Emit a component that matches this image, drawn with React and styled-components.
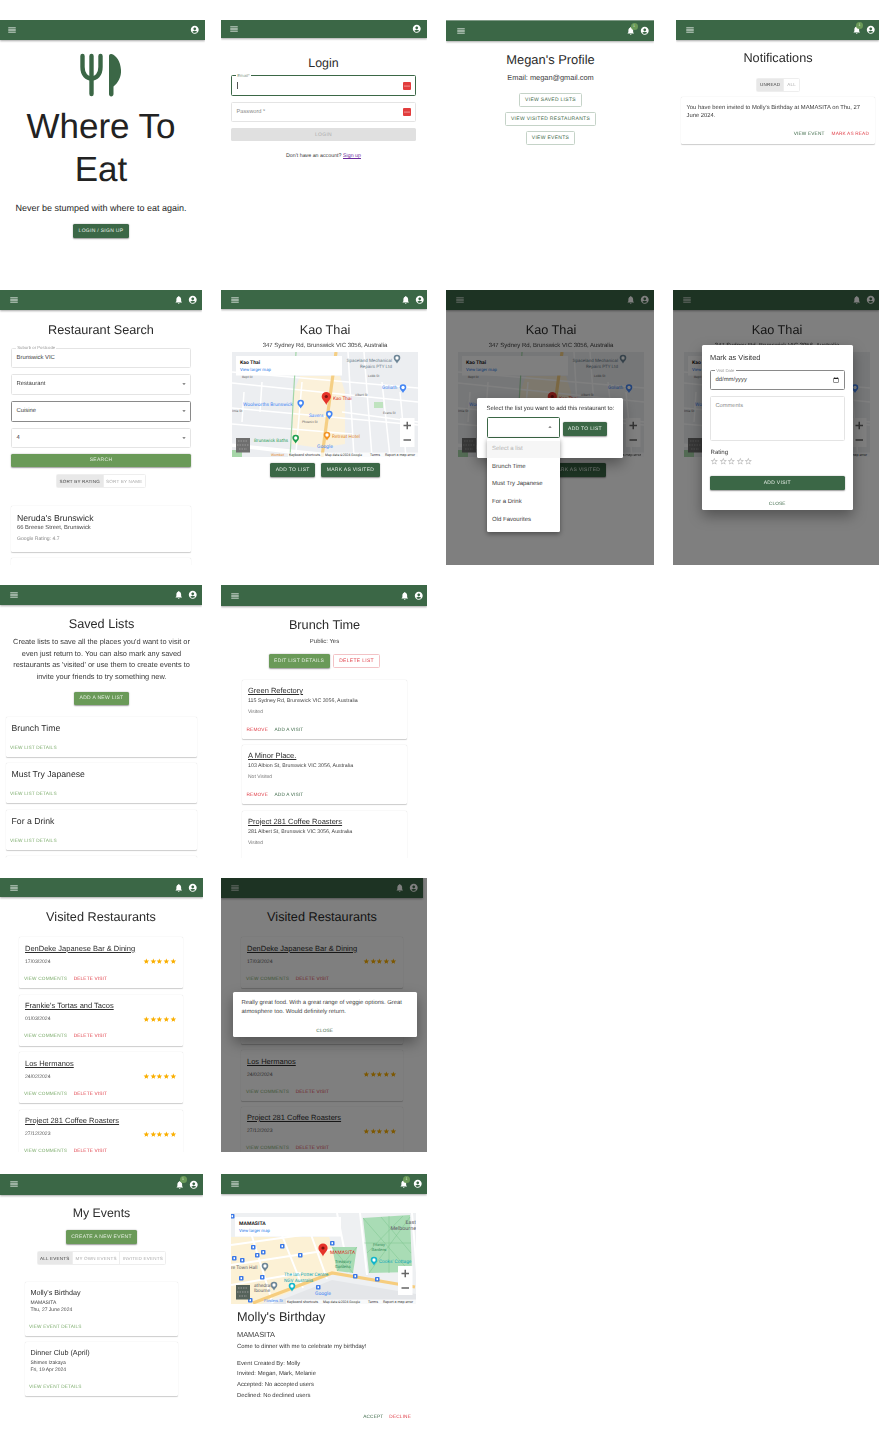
import React from "react";
import styled, { createGlobalStyle, css } from "styled-components";
import { MdMenu, MdNotifications, MdAccountCircle, MdStar, MdStarBorder, MdArrowDropDown, MdArrowDropUp, MdCalendarToday } from "react-icons/md";

const DARK = "#3b6746";
const LIGHT = "#6a9a58";
const RED = "#e0404a";
const mt = css`margin-top:${(p) => p.$mt || 0}px;`;

const Global = createGlobalStyle`
  html,body{margin:0;padding:0;background:#fff;}
  body{width:879px;height:1445px;overflow:hidden;font-family:"Liberation Sans",Arial,sans-serif;color:#262626;text-rendering:geometricPrecision;-webkit-font-smoothing:antialiased;}
  *{box-sizing:border-box;}
`;
const Sheet = styled.div`padding-top:20px;width:879px;height:1445px;filter:blur(.3px);opacity:.999;`;
const Row = styled.div`display:flex;height:${(p) => p.$h}px;margin-bottom:${(p) => p.$mb || 0}px;`;
const Screen = styled.section`position:relative;flex:none;overflow:hidden;width:${(p) => p.$w}px;margin-left:${(p) => p.$ml || 0}px;height:100%;background:#fff;`;
const Bar = styled.header`
  display:flex;align-items:center;color:#fff;background:${DARK};
  height:${(p) => p.$h}px;width:${(p) => (p.$w ? p.$w + "px" : "100%")};padding:0 ${(p) => p.$r}px 0 ${(p) => p.$l}px;
  box-shadow:0 1px 2px rgba(0,0,0,.35);
  ${(p) => p.$line && "border-top:1px solid #7f9a86;"}
`;
const Grow = styled.div`flex:1;`;
const BellWrap = styled.span`position:relative;display:flex;margin-right:4.5px;`;
const Badge = styled.span`position:absolute;left:4.5px;top:-3.5px;width:7px;height:7px;border-radius:50%;background:${LIGHT};color:#cfe3c7;font-size:3.5px;line-height:7px;text-align:center;`;

const AppBar = ({ h = 20, l = 7, r = 6, w, bell, badge, line }) => (
  <Bar $h={h} $l={l} $r={r} $w={w} $line={line}>
    <MdMenu size={10} />
    <Grow />
    {bell && (
      <BellWrap>
        <MdNotifications size={9.5} />
        {badge && <Badge>1</Badge>}
      </BellWrap>
    )}
    <MdAccountCircle size={9.5} />
  </Bar>
);

const Body = styled.div`display:flex;flex-direction:column;align-items:${(p) => p.$align || "stretch"};padding:0 ${(p) => p.$r || 0}px 0 ${(p) => p.$l || 0}px;`;
const Title = styled.h1`${mt}margin-bottom:0;height:16px;padding-top:${(p) => p.$pt || 0}px;font-weight:400;text-align:center;color:#2b2b2b;line-height:16px;font-size:${(p) => p.$size || 12.7}px;${(p) => p.$left && `text-align:left;margin-left:${p.$left}px;`}`;
const Hero = styled.h1`margin:7.5px 0 0;font-weight:400;font-size:35px;line-height:43px;text-align:center;color:#222;`;
const Tagline = styled.p`margin:11.5px 0 0;font-size:9px;line-height:12px;text-align:center;`;
const Para = styled.p`${mt}margin-bottom:0;font-size:${(p) => p.$size || 5.6}px;line-height:${(p) => p.$lh || 8}px;text-align:${(p) => (p.$center ? "center" : "left")};color:${(p) => p.$color || "#3a3a3a"};${(p) => p.$ml && `margin-left:${p.$ml}px;`}${(p) => p.$nowrap && "white-space:nowrap;"}`;
const LinkText = styled.a`color:#6a2a9c;text-decoration:underline;`;

const Btn = styled.button`
  ${mt}display:block;border:0;font-family:inherit;text-rendering:geometricPrecision;text-transform:uppercase;font-size:5px;letter-spacing:.3px;padding:0 5.5px;border-radius:1.5px;
  height:${(p) => p.$h || 14}px;${(p) => p.$full && "width:100%;"}${(p) => p.$auto && "margin-left:auto;margin-right:auto;"}${(p) => p.$mb && `margin-bottom:${p.$mb}px;`}
  ${(p) => p.$kind === "dark" && `background:${DARK};color:#e8efe9;box-shadow:0 .5px 1.5px rgba(0,0,0,.4);`}
  ${(p) => p.$kind === "light" && `background:${LIGHT};color:#e8f0e4;box-shadow:0 .5px 1.5px rgba(0,0,0,.4);`}
  ${(p) => p.$kind === "outline" && `background:#fff;color:${DARK};border:.7px solid #c5d3c8;padding:0 4.8px;`}
  ${(p) => p.$kind === "danger" && `background:#fff;color:${RED};border:.7px solid #f3c3c6;`}
  ${(p) => p.$kind === "off" && `background:#e0e0e0;color:#adadad;`}
`;
const BtnRow = styled.div`${mt}display:flex;justify-content:center;gap:${(p) => p.$gap || 6}px;`;
const TextBtn = styled.span`font-size:4.75px;letter-spacing:.15px;line-height:7px;text-transform:uppercase;color:${(p) => p.$color || DARK};white-space:nowrap;`;
const Actions = styled.div`${mt}display:flex;gap:${(p) => p.$gap || 6.5}px;justify-content:${(p) => (p.$end ? "flex-end" : "flex-start")};${(p) => p.$pr && `padding-right:${p.$pr}px;`}`;

const Toggle = styled.div`${mt}display:flex;align-self:center;border:.6px solid #eee;border-radius:1.5px;height:${(p) => p.$h || 14.5}px;`;
const ToggleItem = styled.span`display:flex;align-items:center;padding:0 ${(p) => p.$p || 2.5}px;font-size:4.55px;letter-spacing:.2px;text-transform:uppercase;color:${(p) => (p.$on ? "#444" : "#ababab")};background:${(p) => (p.$on ? "#e8e8e8" : "#fff")};& + &{border-left:.6px solid #eee;}`;

const Field = styled.div`
  ${mt}position:relative;display:flex;align-items:${(p) => (p.$top ? "flex-start" : "center")};justify-content:space-between;height:${(p) => p.$h || 20.6}px;padding:${(p) => (p.$top ? "6px" : "0")} 4.5px 0;
  ${(p) => p.$w && `width:${p.$w}px;`}
  border-radius:1.5px;border:${(p) => p.$b || ".7px solid #e4e4e4"};font-size:${(p) => p.$size || 5.9}px;color:${(p) => p.$color || "#3c3c3c"};background:#fff;
`;
const Float = styled.span`position:absolute;left:4px;top:-2.5px;padding:0 1.2px;background:#fff;font-size:4.3px;line-height:4.5px;color:${(p) => p.$color || "#9a9a9a"};`;
const Caret = styled.span`display:block;width:.6px;height:7px;background:#555;`;
const Arrow = styled(MdArrowDropDown)`color:#666;margin-right:-2px;`;

const Card = styled.article`
  ${mt}flex:none;background:#fff;border-radius:1.5px;box-shadow:0 .6px 1px rgba(0,0,0,.2),0 0 1.2px rgba(0,0,0,.05);
  ${(p) => p.$h && `height:${p.$h}px;`}${(p) => p.$w && `width:${p.$w}px;`}padding:${(p) => p.$pt || 6}px ${(p) => p.$pr || 6}px 0 ${(p) => p.$pl || 6}px;
`;
const CardName = styled.div`font-size:${(p) => p.$size || 7.5}px;line-height:${(p) => p.$lh || 10}px;color:#2d2d2d;${(p) => p.$u && "text-decoration:underline;"}`;
const CardLine = styled.div`${mt}font-size:${(p) => p.$size || 5}px;line-height:${(p) => p.$lh || 7}px;color:${(p) => p.$color || "#444"};`;
const Inset = styled.div`margin-left:${(p) => p.$x || -1.5}px;`;
const DateRow = styled.div`${mt}display:flex;align-items:center;justify-content:space-between;height:7px;font-size:5.1px;color:#555;`;
const Stars = styled.span`${mt}display:flex;color:#faaf00;`;
const Star = styled(MdStar)`flex:none;`;
const Empty = styled(MdStarBorder)`flex:none;color:#b9b9b9;`;

const Overlay = styled.div`position:absolute;inset:0;background:rgba(0,0,0,.5);`;
const Dialog = styled.div`
  position:absolute;left:${(p) => p.$x}px;top:${(p) => p.$y}px;width:${(p) => p.$w}px;height:${(p) => p.$h}px;background:#fff;border-radius:1.5px;
  padding:7px ${(p) => p.$p}px 0;box-shadow:0 6px 14px rgba(0,0,0,.35);
`;
const DialogHead = styled.h2`margin:0;height:10px;padding-top:.5px;font-weight:400;font-size:7.4px;line-height:10px;color:#333;`;
const DialogRow = styled.div`${mt}display:flex;align-items:flex-end;gap:3px;`;
const Menu = styled.ul`
  position:absolute;left:${(p) => p.$x}px;top:${(p) => p.$y}px;width:73.5px;height:94px;margin:0;padding:2.5px 0;list-style:none;background:#fff;border-radius:1.5px;box-shadow:0 2px 5px rgba(0,0,0,.4);
`;
const MenuItem = styled.li`height:17.6px;padding-left:5.5px;display:flex;align-items:center;font-size:6px;color:${(p) => (p.$off ? "#b5b5b5" : "#3b3b3b")};background:${(p) => (p.$off ? "#f6f6f6" : "#fff")};`;
const Center = styled.div`${mt}text-align:center;font-size:5px;line-height:7px;`;
const MapBox = styled.svg`${mt}display:block;flex:none;`;
const LogoSvg = styled.svg`display:block;align-self:center;margin:13px 0 0;`;
const PmIcon = styled.svg`flex:none;`;
const VisitedTitle = styled(Title)`align-self:center;`;

const Logo = () => (
  <LogoSvg width="44" height="44" viewBox="0 0 44 44">
    <g fill="none" stroke={DARK} strokeWidth="4.4" strokeLinecap="round">
      <path d="M3.500 3V14C3.500 22 8 25.500 12.500 25.500S21.500 22 21.500 14V3" />
      <path d="M12.500 3V41" />
    </g>
    <path fill={DARK} d="M30 3C30 1.500 31 .8 32.300 1C37 2 41.500 8 42 17C42.500 24 39 30 34.500 33.500V41C34.500 42.500 33.500 43.400 32.200 43.400C30.900 43.400 30 42.500 30 41Z" />
  </LogoSvg>
);

const Pm = () => (
  <PmIcon width="8" height="8" viewBox="0 0 8 8">
    <rect width="8" height="8" rx="1" fill="#e23d3d" />
    <circle cx="2" cy="4" r=".6" fill="#fff" /><circle cx="4" cy="4" r=".6" fill="#fff" /><circle cx="6" cy="4" r=".6" fill="#fff" />
  </PmIcon>
);

const Pin = ({ x, y, c = "#4285f4", r = 3.3 }) => (
  <g>
    <path d={`M${x - r} ${y}A${r} ${r} 0 1 1 ${x + r} ${y}C${x + r} ${y + r * .7} ${x + r * .3} ${y + r} ${x} ${y + r * 1.7}C${x - r * .3} ${y + r} ${x - r} ${y + r * .7} ${x - r} ${y}Z`} fill={c} />
    <circle cx={x} cy={y} r={r * .5} fill="#fff" />
  </g>
);
const Red = ({ x, y }) => (
  <g>
    <path d={`M${x - 4.6} ${y}A4.600 4.600 0 1 1 ${x + 4.6} ${y}C${x + 4.6} ${y + 3.6} ${x + 1} ${y + 5} ${x} ${y + 8.6}C${x - 1} ${y + 5} ${x - 4.6} ${y + 3.6} ${x - 4.6} ${y}Z`} fill="#e5332a" />
    <circle cx={x} cy={y} r="1.600" fill="#7d1410" />
  </g>
);
const Controls = ({ x, y }) => (
  <g>
    <rect x={x} y={y} width="14.500" height="29" fill="#fff" />
    <path d={`M${x + 3.5} ${y + 7.5}h7.500M${x + 7.25} ${y + 3.7}v7.500M${x + 3.5} ${y + 22}h7.500`} stroke="#666" strokeWidth="1.500" />
  </g>
);
const InfoCard = ({ w, name }) => (
  <g>
    <rect x="4" y="4" width={w} height="19.500" fill="#fff" />
    <text x="8" y="11.500" fontSize="5.100" fontWeight="700" fill="#222">{name}</text>
    <text x="8" y="18.500" fontSize="4.300" fill="#1a73e8">View larger map</text>
  </g>
);
const Thumb = ({ x, y, c }) => (
  <g>
    <rect x={x} y={y} width="14" height="14.500" fill={c} />
    <path d={`M${x + 2} ${y + 3}h9M${x + 1} ${y + 7}h12M${x + 3} ${y + 11}h8`} stroke="#9a9a9a" strokeWidth="1.200" strokeDasharray="1.500 1" />
  </g>
);
const Attr = ({ x, y, w }) => (
  <g fontSize="3.600" fill="#333">
    <rect x={x} y={y} width={w} height="4.500" fill="#fff" opacity=".75" />
    <text x={x + 1} y={y + 3.4}>Keyboard shortcuts</text>
    <text x={x + 37} y={y + 3.4} fontSize="3.400">Map data ©2024 Google</text>
    <text x={x + 82} y={y + 3.4}>Terms</text>
    <text x={x + 97} y={y + 3.4}>Report a map error</text>
  </g>
);

const KaoMap = ({ mt: top }) => (
  <MapBox $mt={top} width="186" height="105" viewBox="0 0 186 105" fontFamily="Roboto,'Liberation Sans',sans-serif">
    <rect width="186" height="105" fill="#eceef1" />
    <path d="M68 24H108L113 40V92L88 96L60 92L62 40Z" fill="#fbf1da" />
    <g stroke="#fff" strokeWidth="1.500" fill="none">
      <path d="M0 20L186 36M0 31L186 50M0 56L186 73M0 72L120 82M110 60L186 70M0 94L100 106" />
      <path d="M116 0L122 105M132 0L140 105M150 30L158 105M168 40L174 105M30 30L28 60M12 40L10 70M70 30L64 100" />
    </g>
    <path d="M0 93L100 103" stroke="#fff" strokeWidth="3" />
    <path d="M104 0L90 105" stroke="#f5cf84" strokeWidth="3.200" fill="none" />
    <path d="M64 0L58 105" stroke="#a3d6a8" strokeWidth="1.200" fill="none" />
    <rect x="142" y="50" width="9" height="6" fill="#bfe3bf" />
    <rect x="0" y="98" width="10" height="7" fill="#a6d6a8" />
    <g fontSize="3.300" fill="#666">
      <text x="136" y="25">Lobb St</text><text x="123" y="44">Albert St</text><text x="151" y="62">Evans St</text>
      <text x="10" y="26">Bept St</text><text x="0" y="60">Imia St</text><text x="70" y="71">Phoenix St</text>
    </g>
    <text x="160" y="10" textAnchor="end" fontSize="4.500" fill="#6d7f8c">Spaceland Mechanical</text>
    <text x="160" y="15.500" textAnchor="end" fontSize="4.500" fill="#6d7f8c">Repairs PTY Ltd</text>
    <Pin x={165} y={6} c="#6d8596" />
    <text x="150" y="37" fontSize="4.800" fill="#4285f4">Goliath</text><Pin x={171} y={35.5} />
    <text x="11" y="54" fontSize="4.900" fill="#4285f4">Woolworths Brunswick</text><Pin x={68.7} y={51} />
    <text x="77" y="65" fontSize="4.800" fill="#4285f4">Savers</text><Pin x={97.3} y={62} />
    <text x="22" y="89.500" fontSize="4.600" fill="#2e9e5b">Brunswick Baths</text><Pin x={63.7} y={86} c="#1e9e4f" />
    <text x="100" y="85.500" fontSize="4.800" fill="#e28a2a">Retreat Hotel</text><Pin x={95} y={83} c="#f29425" />
    <text x="101" y="48" fontSize="4.800" fill="#d9362b">Kao Thai</text>
    <text x="85" y="96" fontSize="5" fill="#4285f4">Google</text>
    <text x="39" y="103.500" fontSize="3.500" fill="#e28a2a">Wombat</text>
    <InfoCard w={106} name="Kao Thai" />
    <Red x={94.3} y={44.5} />
    <Controls x={168} y={66} />
    <Thumb x={4} y={86} c="#6f6f6f" />
    <Attr x={56} y={100.500} w={130} />
  </MapBox>
);

const Pk = ({ x, y }) => (
  <g><rect x={x} y={y} width="4.500" height="4.500" rx=".8" fill="#3b78e7" /><rect x={x + 1.5} y={y + 1.2} width="1.500" height="2" fill="#fff" /></g>
);
const MamaMap = ({ mt: top }) => (
  <MapBox $mt={top} width="185" height="91" viewBox="0 0 185 91" fontFamily="Roboto,'Liberation Sans',sans-serif">
    <rect width="185" height="91" fill="#eef0f2" />
    <path d="M0 24H98L110 58L30 91H0Z" fill="#fcf1d5" />
    <g stroke="#fff" strokeWidth="2" fill="none">
      <path d="M0 32L100 18M0 52L105 36M0 72L70 60M20 20L42 91M50 20L72 75M78 16L96 66M106 0L118 60" />
    </g>
    <path d="M101 34L126 34L122 60L106 58Z" fill="#a9dcb5" />
    <path d="M132 5L179 2L181 59L138 60Z" fill="#a9dcb5" />
    <g stroke="#7cc48f" strokeWidth=".5" fill="none">
      <path d="M132 5L179 59M179 4L138 60M158 3L158 60M133 30L180 30M150 4L180 40M172 3L136 40" />
      <path d="M101 34L122 60M126 34L106 58" />
    </g>
    <path d="M129 0L136 62M181 0L186 60" stroke="#fff" strokeWidth="2" fill="none" />
    <path d="M22 90L101 60L184 74" stroke="#f6cd7e" strokeWidth="3.200" fill="none" />
    <path d="M40 91L101 67L185 81V91Z" fill="#e4e6e9" />
    <text x="185" y="11" textAnchor="end" fontSize="5.400" fill="#5f6368">East</text>
    <text x="185" y="17" textAnchor="end" fontSize="5.400" fill="#5f6368">Melbourne</text>
    <text x="148" y="33" fontSize="4" fill="#2e8b57" textAnchor="middle">Fitzroy</text>
    <text x="148" y="38" fontSize="4" fill="#2e8b57" textAnchor="middle">Gardens</text>
    <text x="104" y="50" fontSize="4.200" fill="#2e8b57">Treasury</text>
    <text x="104" y="55" fontSize="4.200" fill="#2e8b57">Gardens</text>
    <text x="148" y="49.500" fontSize="4.800" fill="#12a7b8">Cooks' Cottage</text><Pin x={143} y={47} c="#12b5cb" />
    <text x="0" y="55.500" fontSize="4.800" fill="#5f6368">re Town Hall</text><Pin x={34} y={53} c="#6d8596" />
    <text x="53" y="62.500" fontSize="4.700" fill="#12a7b8">The Ian Potter Centre</text>
    <text x="53" y="68.500" fontSize="4.700" fill="#12a7b8">NGV Australia</text><Pin x={61} y={73} c="#12b5cb" />
    <text x="23" y="74" fontSize="4.800" fill="#5f6368">athedral,</text><text x="23" y="79" fontSize="4.800" fill="#5f6368">lbourne</text><Pin x={43} y={72} c="#6d8596" />
    <text x="84" y="82" fontSize="5" fill="#4285f4">Google</text>
    <text x="33" y="88.500" fontSize="4" fill="#4285f4">Flinders St</text>
    {[[-1,1],[20,32],[49,31],[1,43],[9,45],[24,40],[30,37],[67,40],[99,28],[122,61],[144,64],[29,62],[8,63],[85,72],[17,85]].map(([x,y],i)=>(<Pk key={i} x={x} y={y} />))}
    <text x="99" y="40.500" fontSize="4.900" fill="#d9362b">MAMASITA</text>
    <InfoCard w={106} name="MAMASITA" />
    <Red x={92} y={35} />
    <Controls x={167} y={53} />
    <Thumb x={5} y={72} c="#55625a" />
    <Attr x={55} y={86.500} w={130} />
  </MapBox>
);

const KaoPage = ({ l, r, top = 11 }) => (
  <Body $l={l} $r={r} $align="center">
    <Title $mt={top} $pt={1}>Kao Thai</Title>
    <Para $mt={top === 11 ? 5 : 4.5} $size={6} $center>347 Sydney Rd, Brunswick VIC 3056, Australia</Para>
    <KaoMap mt={top === 11 ? 2 : 2.5} />
    <BtnRow $mt={6}>
      <Btn $kind="dark">Add to list</Btn>
      <Btn $kind="dark">Mark as visited</Btn>
    </BtnRow>
  </Body>
);

const ListCard = ({ name, mt: top }) => (
  <Card $mt={top} $h={40} $pl={5.5}>
    <CardName $size={8.7} $lh={11}>{name}</CardName>
    <Inset><CardLine $mt={11}><TextBtn $color="#7fae6f">View list details</TextBtn></CardLine></Inset>
  </Card>
);
const PlaceCard = ({ name, addr, state, mt: top, h = 59, cut }) => (
  <Card $mt={top} $h={h} $w={165}>
    <CardName $u>{name}</CardName>
    <CardLine $mt={2} $size={5.3} $lh={6}>{addr}</CardLine>
    <CardLine $mt={5} $size={5} $lh={6} $color="#777">{state}</CardLine>
    {!cut && (
      <Inset>
        <Actions $mt={11.5}><TextBtn $color={RED}>Remove</TextBtn><TextBtn>Add a visit</TextBtn></Actions>
      </Inset>
    )}
  </Card>
);
const VisitCard = ({ name, date, mt: top, h, w }) => (
  <Card $mt={top} $h={h} $w={w} $pt={6.5} $pr={6.5}>
    <CardName $u>{name}</CardName>
    <DateRow $mt={4.5}>
      {date}
      <Stars>{[0, 1, 2, 3, 4].map((i) => <Star key={i} size={6.7} />)}</Stars>
    </DateRow>
    <Inset $x={-1}>
      <Actions $mt={10.5}><TextBtn $color="#7fae6f">View comments</TextBtn><TextBtn $color={RED}>Delete visit</TextBtn></Actions>
    </Inset>
  </Card>
);
const VisitList = ({ h, gap, w }) => (
  <>
    <VisitCard mt={12} h={h} w={w} name="DenDeke Japanese Bar & Dining" date="17/03/2024" />
    <VisitCard mt={gap} h={h} w={w} name="Frankie's Tortas and Tacos" date="01/03/2024" />
    <VisitCard mt={gap} h={h} w={w} name="Los Hermanos" date="24/02/2024" />
    <VisitCard mt={gap} h={h} w={w} name="Project 281 Coffee Roasters" date="27/12/2023" />
  </>
);
const EventCard = ({ name, place, date, mt: top }) => (
  <Card $mt={top} $h={54} $w={153} $pl={5.5}>
    <CardName $size={7.2}>{name}</CardName>
    <CardLine $mt={1.5}>{place}</CardLine>
    <CardLine>{date}</CardLine>
    <Inset><CardLine $mt={10.5}><TextBtn $color="#7fae6f">View event details</TextBtn></CardLine></Inset>
  </Card>
);

const Home = () => (
  <Screen $w={205}>
    <AppBar h={20} l={7} r={5.5} />
    <Body $align="center" $r={3}>
      <Logo />
      <Hero>Where To<br />Eat</Hero>
      <Tagline>Never be stumped with where to eat again.</Tagline>
      <Btn $mt={9.5} $kind="dark" $h={14}>Login / Sign up</Btn>
    </Body>
  </Screen>
);
const Login = () => (
  <Screen $w={206} $ml={16}>
    <AppBar h={18} l={8} r={5.5} />
    <Body $l={10} $r={11}>
      <Title $mt={17} $size={12.4}>Login</Title>
      <Field $mt={4} $h={21} $b={`.9px solid ${DARK}`}>
        <Float $color="#7f9a86">Email*</Float><Caret /><Pm />
      </Field>
      <Field $mt={5.5} $h={20} $color="#8a8a8a" $size={5.7}>Password *<Pm /></Field>
      <Btn $mt={6.5} $h={13} $kind="off" $full>Login</Btn>
      <Para $mt={11} $size={5.3} $center>Don't have an account? <LinkText>Sign up</LinkText></Para>
    </Body>
  </Screen>
);
const Profile = () => (
  <Screen $w={208} $ml={19}>
    <AppBar h={21} l={9.5} r={4.5} bell badge line />
    <Body $align="center" $l={1}>
      <Title $mt={11} $size={12.9}>Megan's Profile</Title>
      <Para $mt={5} $size={7.4} $lh={10}>Email: megan@gmail.com</Para>
      <Btn $mt={10} $h={13.5} $kind="outline">View saved lists</Btn>
      <Btn $mt={5.5} $h={13.5} $kind="outline">View visited restaurants</Btn>
      <Btn $mt={5.5} $h={13.5} $kind="outline">View events</Btn>
    </Body>
  </Screen>
);
const Notifs = () => (
  <Screen $w={203} $ml={22}>
    <AppBar h={20} l={8.5} r={4} bell badge />
    <Body $l={5} $r={4}>
      <Title $mt={10}>Notifications</Title>
      <Toggle $mt={11.5}><ToggleItem $on $p={3}>Unread</ToggleItem><ToggleItem $p={3}>All</ToggleItem></Toggle>
      <Card $mt={5} $h={47} $pt={7} $pl={5.5}>
        <Para $size={5.85}>You have been invited to Molly's Birthday at MAMASITA on Thu, 27 June 2024.</Para>
        <Actions $mt={11} $end $gap={7}><TextBtn>View event</TextBtn><TextBtn $color={RED}>Mark as read</TextBtn></Actions>
      </Card>
    </Body>
  </Screen>
);
const Search = () => (
  <Screen $w={202}>
    <AppBar h={20} l={8.5} r={5} bell />
    <Body $l={11} $r={11}>
      <Title $mt={11} $pt={1}>Restaurant Search</Title>
      <Field $mt={10.7}><Float>Suburb or Postcode</Float>Brunswick VIC</Field>
      <Field $mt={5.7}>Restaurant<Arrow size={8} /></Field>
      <Field $mt={6.4} $b="1px solid #8a8a8a">Cuisine<Arrow size={8} /></Field>
      <Field $mt={6}>4<Arrow size={8} /></Field>
      <Btn $mt={5.7} $h={13} $kind="light" $full>Search</Btn>
      <Toggle $mt={7}><ToggleItem $on>Sort by rating</ToggleItem><ToggleItem>Sort by name</ToggleItem></Toggle>
      <Card $mt={17.5} $h={46} $pt={7}>
        <CardName $size={8.7} $lh={11}>Neruda's Brunswick</CardName>
        <CardLine $mt={1} $size={5.85}>66 Breese Street, Brunswick</CardLine>
        <CardLine $mt={4.5} $size={5.1} $color="#888">Google Rating: 4.7</CardLine>
      </Card>
      <Card $mt={6} $h={46} />
    </Body>
  </Screen>
);
const Kao = () => (
  <Screen $w={206} $ml={19}>
    <AppBar h={19} l={8.5} r={3} bell />
    <KaoPage l={11} r={9} top={12} />
  </Screen>
);
const KaoList = () => (
  <Screen $w={208} $ml={19}>
    <AppBar h={20} l={9} r={4.5} bell />
    <KaoPage l={12} r={10} />
    <Overlay />
    <Dialog $x={31} $y={108} $w={146} $h={60} $p={9.5}>
      <Para $size={6} $color="#333" $nowrap>Select the list you want to add this restaurant to:</Para>
      <DialogRow $mt={4}>
        <Field $w={73} $h={20.5} $b={`.9px solid ${DARK}`}>
          <span /><MdArrowDropUp size={8} color="#666" />
        </Field>
        <Btn $kind="dark" $mb={1.5}>Add to list</Btn>
      </DialogRow>
    </Dialog>
    <Menu $x={40.5} $y={148}>
      <MenuItem $off>Select a list</MenuItem>
      <MenuItem>Brunch Time</MenuItem>
      <MenuItem>Must Try Japanese</MenuItem>
      <MenuItem>For a Drink</MenuItem>
      <MenuItem>Old Favourites</MenuItem>
    </Menu>
  </Screen>
);
const KaoVisit = () => (
  <Screen $w={206} $ml={19}>
    <AppBar h={20} l={9} r={3.5} bell />
    <KaoPage l={12} r={10} />
    <Overlay />
    <Dialog $x={28.5} $y={55} $w={151.5} $h={165} $p={8.5}>
      <DialogHead>Mark as Visited</DialogHead>
      <Field $mt={8} $h={20} $b="1px solid #8a8a8a">
        <Float>Visit Date</Float>dd/mm/yyyy<MdCalendarToday size={6} color="#222" />
      </Field>
      <Field $mt={6} $h={45} $top $color="#8a8a8a" $size={5.7}>Comments</Field>
      <Para $mt={7.5} $size={6.1} $lh={7} $ml={.5}>Rating</Para>
      <Stars $mt={1}>{[0, 1, 2, 3, 4].map((i) => <Empty key={i} size={8.6} />)}</Stars>
      <Btn $mt={11.2} $h={13.5} $kind="dark" $full>Add visit</Btn>
      <Center $mt={11.5}><TextBtn>Close</TextBtn></Center>
    </Dialog>
  </Screen>
);
const Lists = () => (
  <Screen $w={202}>
    <AppBar h={20} l={9} r={5} bell />
    <Body $l={6} $r={5}>
      <Title $mt={11}>Saved Lists</Title>
      <Para $mt={4} $size={7.4} $lh={11.7} $center>Create lists to save all the places you'd want to visit or even just return to. You can also mark any saved restaurants as 'visited' or use them to create events to invite your friends to try something new.</Para>
      <Center $mt={9}><Btn $h={13} $kind="light" $auto>Add a new list</Btn></Center>
      <ListCard mt={12} name="Brunch Time" />
      <ListCard mt={6.5} name="Must Try Japanese" />
      <ListCard mt={6.5} name="For a Drink" />
      <Card $mt={6.5} $h={40} />
    </Body>
  </Screen>
);
const ListDetail = () => (
  <Screen $w={206} $ml={19}>
    <AppBar h={21} l={9} r={4} bell />
    <Body $l={21} $r={20}>
      <Title $mt={11}>Brunch Time</Title>
      <Para $mt={5.5} $size={6} $lh={7} $center>Public: Yes</Para>
      <BtnRow $mt={8.5} $gap={3}>
        <Btn $h={13.5} $kind="light">Edit list details</Btn>
        <Btn $h={13.5} $kind="danger">Delete list</Btn>
      </BtnRow>
      <PlaceCard mt={12.5} name="Green Refectory" addr="115 Sydney Rd, Brunswick VIC 3056, Australia" state="Visited" />
      <PlaceCard mt={6} name="A Minor Place." addr="103 Albion St, Brunswick VIC 3056, Australia" state="Not Visited" />
      <PlaceCard mt={6.5} cut name="Project 281 Coffee Roasters" addr="281 Albert St, Brunswick VIC 3056, Australia" state="Visited" />
    </Body>
  </Screen>
);
const Visited = () => (
  <Screen $w={203}>
    <AppBar h={19} l={8.5} r={6} bell />
    <Body $l={19} $r={20} $align="flex-start">
      <VisitedTitle $mt={12}>Visited Restaurants</VisitedTitle>
      <VisitList h={51} gap={6.5} w={164} />
    </Body>
  </Screen>
);
const VisitedDark = () => (
  <Screen $w={206} $ml={18}>
    <AppBar h={20} w={202} l={9} r={5} bell />
    <Body $l={20} $r={24} $align="flex-start">
      <VisitedTitle $mt={11}>Visited Restaurants</VisitedTitle>
      <VisitList h={50.5} gap={6} w={162} />
    </Body>
    <Overlay />
    <Dialog $x={11.5} $y={114} $w={184.5} $h={45} $p={9}>
      <Para $size={5.9} $lh={8.5} $color="#444">Really great food. With a great range of veggie options. Great atmosphere too. Would definitely return.</Para>
      <Center $mt={11.5}><TextBtn>Close</TextBtn></Center>
    </Dialog>
  </Screen>
);
const Events = () => (
  <Screen $w={203}>
    <AppBar h={20.5} l={9} r={4.5} bell badge />
    <Body $l={25} $r={25}>
      <Title $mt={10.5} $size={12.3}>My Events</Title>
      <Center $mt={9}><Btn $kind="light" $auto>Create a new event</Btn></Center>
      <Toggle $mt={7} $h={14}><ToggleItem $on>All events</ToggleItem><ToggleItem>My own events</ToggleItem><ToggleItem>Invited events</ToggleItem></Toggle>
      <EventCard mt={17} name="Molly's Birthday" place="MAMASITA" date="Thu, 27 June 2024" />
      <EventCard mt={6} name="Dinner Club (April)" place="Shimes Izakaya" date="Fri, 19 Apr 2024" />
    </Body>
  </Screen>
);
const EventDetail = () => (
  <Screen $w={206} $ml={18}>
    <AppBar h={20} l={8.5} r={5} bell badge />
    <Body $l={10} $r={11}>
      <MamaMap mt={19} />
      <Title $mt={5} $left={6}>Molly's Birthday</Title>
      <Para $mt={5} $size={7.4} $lh={10} $ml={6}>MAMASITA</Para>
      <Para $mt={3.5} $size={5.95} $lh={7} $ml={6}>Come to dinner with me to celebrate my birthday!</Para>
      <Para $mt={10} $size={5.9} $lh={7} $ml={6}>Event Created By: Molly</Para>
      <Para $mt={3.8} $size={5.9} $lh={7} $ml={6}>Invited: Megan, Mark, Melanie</Para>
      <Para $mt={3.8} $size={5.9} $lh={7} $ml={6}>Accepted: No accepted users</Para>
      <Para $mt={3.8} $size={5.9} $lh={7} $ml={6}>Declined: No declined users</Para>
      <Actions $mt={14} $end $pr={5} $gap={6}><TextBtn>Accept</TextBtn><TextBtn $color={RED}>Decline</TextBtn></Actions>
    </Body>
  </Screen>
);

export default function App() {
  return (
    <>
      <Global />
      <Sheet>
        <Row $h={270}><Home /><Login /><Profile /><Notifs /></Row>
        <Row $h={275} $mb={20}><Search /><Kao /><KaoList /><KaoVisit /></Row>
        <Row $h={273} $mb={20}><Lists /><ListDetail /></Row>
        <Row $h={274} $mb={22}><Visited /><VisitedDark /></Row>
        <Row $h={271}><Events /><EventDetail /></Row>
      </Sheet>
    </>
  );
}
